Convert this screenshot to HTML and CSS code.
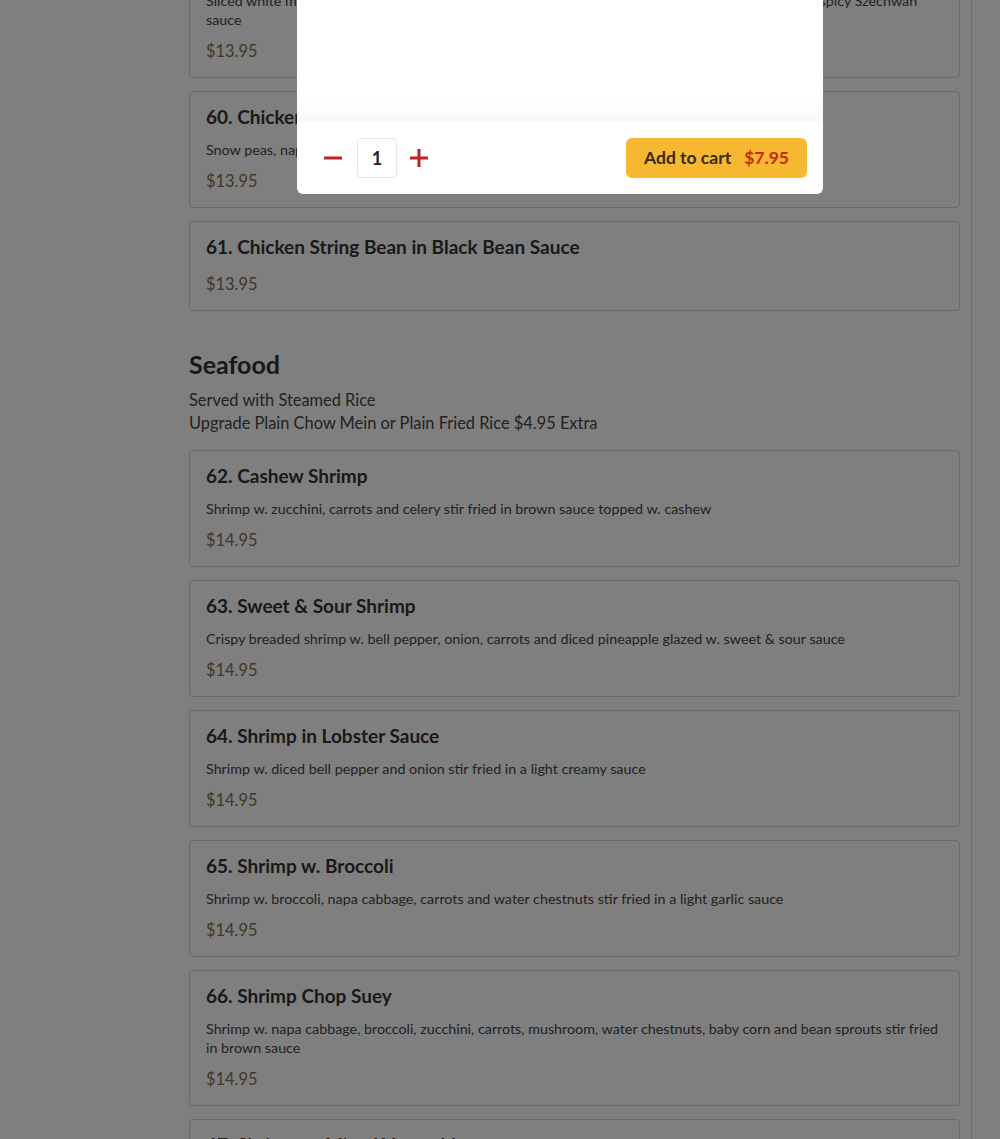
FILE: index.html
```html
<!DOCTYPE html>
<html lang="en">
<head>
<meta charset="utf-8">
<title>Menu</title>
<link rel="stylesheet" href="styles.css">
</head>
<body>
<div class="page">
  <aside class="sidebar"></aside>
  <main class="menu">
    <section class="category">
      <div class="items">
        <div class="item">
          <div class="item-title">59. Szechwan Chicken</div>
          <div class="item-desc">Sliced white meat chicken w. bell pepper, onion, carrots, zucchini, celery and peanuts stir fried in a spicy Szechwan sauce</div>
          <div class="item-price">$13.95</div>
        </div>
        <div class="item">
          <div class="item-title">60. Chicken w. Snow Peas</div>
          <div class="item-desc">Snow peas, napa cabbage, carrots and water chestnuts stir fried in brown sauce</div>
          <div class="item-price">$13.95</div>
        </div>
        <div class="item">
          <div class="item-title">61. Chicken String Bean in Black Bean Sauce</div>
          <div class="item-price">$13.95</div>
        </div>
      </div>
    </section>
    <section class="category">
      <h2 class="cat-title">Seafood</h2>
      <p class="cat-desc">Served with Steamed Rice<br>Upgrade Plain Chow Mein or Plain Fried Rice $4.95 Extra</p>
      <div class="items">
        <div class="item">
          <div class="item-title">62. Cashew Shrimp</div>
          <div class="item-desc">Shrimp w. zucchini, carrots and celery stir fried in brown sauce topped w. cashew</div>
          <div class="item-price">$14.95</div>
        </div>
        <div class="item">
          <div class="item-title">63. Sweet &amp; Sour Shrimp</div>
          <div class="item-desc">Crispy breaded shrimp w. bell pepper, onion, carrots and diced pineapple glazed w. sweet &amp; sour sauce</div>
          <div class="item-price">$14.95</div>
        </div>
        <div class="item">
          <div class="item-title">64. Shrimp in Lobster Sauce</div>
          <div class="item-desc">Shrimp w. diced bell pepper and onion stir fried in a light creamy sauce</div>
          <div class="item-price">$14.95</div>
        </div>
        <div class="item">
          <div class="item-title">65. Shrimp w. Broccoli</div>
          <div class="item-desc">Shrimp w. broccoli, napa cabbage, carrots and water chestnuts stir fried in a light garlic sauce</div>
          <div class="item-price">$14.95</div>
        </div>
        <div class="item">
          <div class="item-title">66. Shrimp Chop Suey</div>
          <div class="item-desc">Shrimp w. napa cabbage, broccoli, zucchini, carrots, mushroom, water chestnuts, baby corn and bean sprouts stir fried in brown sauce</div>
          <div class="item-price">$14.95</div>
        </div>
        <div class="item">
          <div class="item-title">67. Shrimp w. Mixed Vegetables</div>
          <div class="item-desc">Shrimp w. broccoli, napa cabbage, zucchini, carrots and mushroom stir fried in brown sauce</div>
          <div class="item-price">$14.95</div>
        </div>
      </div>
    </section>
  </main>
</div>
<div class="overlay"></div>
<div class="modal">
  <div class="modal-body"></div>
  <div class="modal-footer">
    <div class="qty">
      <button class="qty-btn qty-minus" aria-label="Decrease">
        <svg width="20" height="20" viewBox="0 0 20 20"><path d="M1 10H19" stroke="#bd2229" stroke-width="3"/></svg>
      </button>
      <div class="qty-value">1</div>
      <button class="qty-btn qty-plus" aria-label="Increase">
        <svg width="20" height="20" viewBox="0 0 20 20"><path d="M1 10H19M10 1V19" stroke="#bd2229" stroke-width="3"/></svg>
      </button>
    </div>
    <button class="add-btn"><span class="add-label">Add to cart</span><span class="add-price">$7.95</span></button>
  </div>
</div>
</body>
</html>
```
FILE: styles.css
```css
* { box-sizing: border-box; }
html, body { margin: 0; padding: 0; }
body {
  font-family: Lato, "Liberation Sans", sans-serif;
  background: #ffffff;
  color: #333333;
  height: 1139px;
  overflow: hidden;
}
.page {
  display: flex;
  align-items: flex-start;
}
.sidebar {
  width: 189px;
  flex: none;
}
.menu {
  width: 783px;
  flex: none;
  padding-right: 11px;
  border-right: 1px solid #dcdcdc;
  margin-top: -58px;
  min-height: 1300px;
}
.category + .category { margin-top: 37px; }
.cat-title {
  margin: 0;
  font-size: 25px;
  line-height: 32px;
  font-weight: 700;
  color: #333333;
}
.cat-desc {
  margin: 8px 0 0;
  font-size: 16.4px;
  line-height: 23px;
  color: #444444;
}
.category .cat-desc + .items { margin-top: 16px; }
.items {
  display: flex;
  flex-direction: column;
  gap: 13px;
}
.item {
  border: 1px solid #d4d4d4;
  border-radius: 4px;
  padding: 13px 16px 15px;
}
.item-title {
  font-size: 19px;
  line-height: 24px;
  font-weight: 700;
  color: #333333;
  margin-bottom: 12px;
}
.item-desc {
  font-size: 14.3px;
  line-height: 19px;
  color: #444444;
  margin-top: -1px;
  margin-bottom: 9px;
}
.item-price {
  font-size: 16.4px;
  line-height: 22px;
  padding-top: 2px;
  color: #807050;
}
.overlay {
  position: fixed;
  inset: 0;
  background: rgba(0, 0, 0, 0.5);
}
.modal {
  position: fixed;
  top: 0;
  left: 297px;
  width: 526px;
  background: #ffffff;
  border-radius: 0 0 6px 6px;
  overflow: hidden;
}
.modal-body { height: 122px; }
.modal-footer {
  height: 72px;
  display: flex;
  align-items: center;
  justify-content: space-between;
  padding: 0 16px;
  box-shadow: 0 -8px 18px rgba(0, 0, 0, 0.045);
  position: relative;
}
.qty {
  display: flex;
  align-items: center;
}
.qty-btn {
  width: 40px;
  height: 40px;
  border: 0;
  background: transparent;
  padding: 0;
  display: flex;
  align-items: center;
  justify-content: center;
}
.qty-minus { margin-right: 4px; }
.qty-plus { margin-left: 2px; }
.qty-value {
  width: 40px;
  height: 40px;
  border: 1px solid #e6e6e6;
  border-radius: 4px;
  display: flex;
  align-items: center;
  justify-content: center;
  font-size: 18px;
  color: #222222;
  font-weight: 700;
}
.add-btn {
  width: 181px;
  height: 40px;
  border: 0;
  border-radius: 6px;
  background: #f6b731;
  display: flex;
  align-items: center;
  justify-content: center;
  gap: 13px;
  padding: 0 0 2px;
  font-family: Lato, "Liberation Sans", sans-serif;
  font-size: 17.5px;
  font-weight: 700;
}
.add-label { color: #3a2a0c; }
.add-price { color: #c7290f; }
```
